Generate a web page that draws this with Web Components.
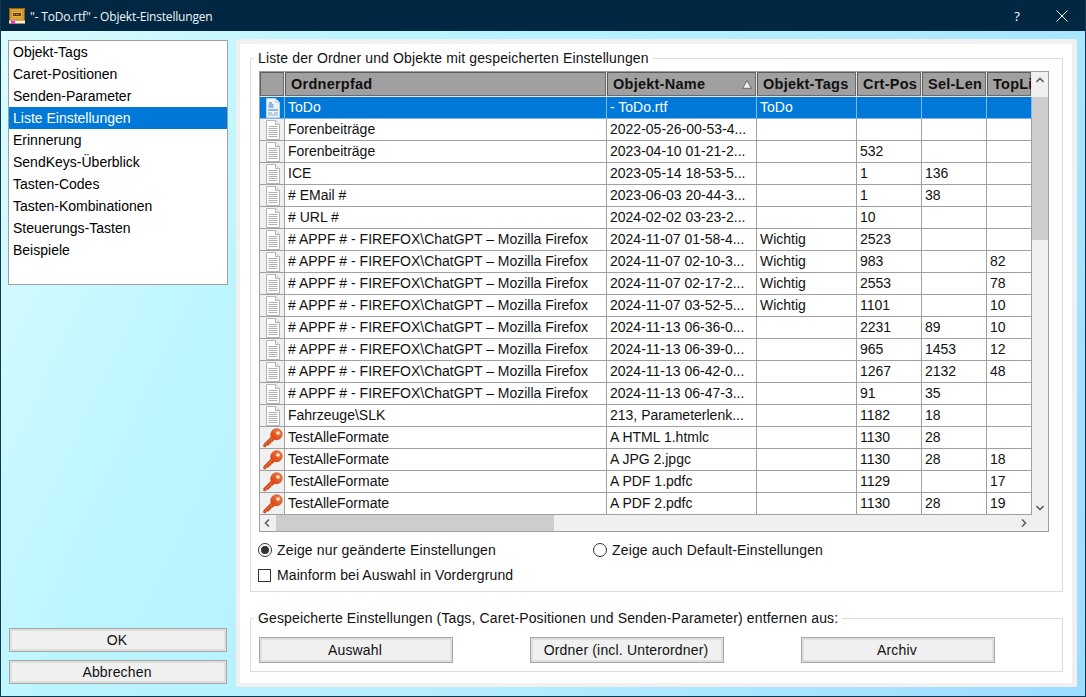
<!DOCTYPE html>
<html><head><meta charset="utf-8"><style>
html,body{margin:0;padding:0;height:100%;overflow:hidden}
body{font:14px "Liberation Sans",Arial,sans-serif;color:#000}
</style></head><body>
<x-window heading="&quot;- ToDo.rtf&quot; - Objekt-Einstellungen">
  <x-sidebar slot="side" items="Objekt-Tags|Caret-Positionen|Senden-Parameter|Liste Einstellungen|Erinnerung|SendKeys-Überblick|Tasten-Codes|Tasten-Kombinationen|Steuerungs-Tasten|Beispiele" selected="3"></x-sidebar>
  <x-panel slot="main">
    <x-group legend="Liste der Ordner und Objekte mit gespeicherten Einstellungen" class="list">
      <x-grid></x-grid>
      <x-options></x-options>
    </x-group>
    <x-group legend="Gespeicherte Einstellungen (Tags, Caret-Positionen und Senden-Parameter) entfernen aus:" class="rm">
      <x-actions></x-actions>
    </x-group>
  </x-panel>
</x-window>
<script>
const def=(n,css,html,init)=>customElements.define(n,class extends HTMLElement{
  connectedCallback(){ if(this.shadowRoot)return; const s=this.attachShadow({mode:'open'});
    s.innerHTML=`<style>${css}</style>`+(typeof html==='function'?html(this):html); if(init)init(this,s);} });

const bookIcon=`<svg width="16" height="16" viewBox="0 0 16 16"><rect x="0" y="0" width="16" height="12.500" rx="1" fill="#d3962c"/><rect x=".5" y=".5" width="15" height="12" rx="1" fill="none" stroke="#8f5e16"/><path d="M2 2h12M2 10.500h12" stroke="#f0c464" stroke-dasharray="1 1"/><rect x="3" y="4" width="10" height="5" fill="#e6b54c"/><rect x="4" y="5" width="8" height="3" fill="#5c3a12"/><path d="M5 6.500h6" stroke="#e3b03e" stroke-dasharray="1 1"/><rect x="0" y="12.500" width="16" height="2.500" fill="#f7efdc"/><rect x="0" y="15" width="16" height="1" fill="#a98b58"/><rect x="2" y="13" width="4" height="3" fill="#e436c8"/></svg>`;
def('x-window',`
:host{display:flex;flex-direction:column;width:1086px;height:697px;box-sizing:border-box;border:1px solid #0e3a56;border-top-color:#012743;background:linear-gradient(115deg,#dcfdff 0%,#bdf5ff 25%,#b2ecff 60%,#9cdcff 100%)}
header{display:flex;align-items:center;height:30px;flex:none;background:#012743;color:#fff;font:12px "Open Sans","Noto Sans",sans-serif;padding-left:8px}
.ic{display:flex;margin-right:5px}
.t{flex:1;color:#f0f6fa;letter-spacing:-.18px}
.q{width:46px;text-align:center;font-size:13px;padding-left:2px;box-sizing:border-box}
.x{width:46px;display:flex;justify-content:center;margin-left:0}
.body{flex:1;display:flex;min-height:0;padding:8px 8px 9px 7px;gap:8px}
`,h=>`<header><span class="ic">${bookIcon}</span><span class="t">${h.getAttribute('heading').replace(/"/g,'&quot;')}</span><span class="q">?</span><span class="x"><svg width="12" height="12" viewBox="0 0 12 12"><path d="M.5.5l11 11M11.5.5l-11 11" stroke="#fff" fill="none"/></svg></span></header><div class="body"><slot name="side"></slot><slot name="main"></slot></div>`);

def('x-button',`
:host{display:block;box-sizing:border-box;background:#f0f0f0;border:1px solid #a6a6a6;box-shadow:inset 0 0 0 2px #dedede;text-align:center;padding-right:2px;font:14px "Liberation Sans",Arial,sans-serif;letter-spacing:.17px;color:#111}
`,`<slot></slot>`);

def('x-sidebar',`
:host{display:flex;flex-direction:column;width:220px;flex:none}
.l{box-sizing:border-box;height:245px;margin-top:1px;background:#fff;border:1px solid #a0a0a0}
.i{height:22px;line-height:22px;padding-left:4px}
.s{background:#0078d7;color:#fff}
.b{margin-top:auto;display:flex;flex-direction:column;gap:8px;padding:0 1px 3px}
x-button{height:24px;line-height:22px}
`,h=>`<div class="l">${h.getAttribute('items').split('|').map((t,i)=>`<div class="i${i==h.getAttribute('selected')?' s':''}">${t}</div>`).join('')}</div><div class="b"><x-button>OK</x-button><x-button>Abbrechen</x-button></div>`);

def('x-panel',`
:host{display:flex;flex-direction:column;width:841px;flex:none;box-sizing:border-box;background:#fff;border:solid #f0f0f0;border-width:5px 5px 4px 4px;padding:14px 9px 11px 10px;gap:26px}
`,`<slot></slot>`);

def('x-group',`
:host{display:block;position:relative;flex:none;box-sizing:border-box;border:1px solid #dcdcdc;padding:12px 8px 0 8px}
:host(.list){height:534px}
:host(.rm){height:54px;padding-top:18px}
.lg{position:absolute;left:3px;top:-9px;background:#fff;padding:0 4px;line-height:17px;white-space:nowrap;color:#111;letter-spacing:.13px}
`,h=>`<div class="lg">${h.getAttribute('legend')}</div><slot></slot>`);

const doc=sel=>{const f=sel?'#eaf4fd':'#fff',st=sel?'#b9d4ee':'#b4b4b4',ln=sel?'#3b78c4':'#b0b0b0';
 return `<svg width="16" height="20" viewBox="0 0 16 20"><path d="M1.500.5h9l4 4v15h-13z" fill="${f}" stroke="${st}"/><path d="M10.500.5v4h4" fill="#eee" stroke="${st}"/>`+
 (sel?`<path d="M4 5h3M3.500 7h5M3.500 9h5M3 12h10" stroke="${ln}" stroke-width="1"/><path d="M3 15h4M9 15h4" stroke="#8aa" /><path d="M3 17h10" stroke="#9ab"/>`
 :`<path d="M3.500 6.500h9M3.500 8.500h9M3.500 10.500h9M3.500 12.500h9M3.500 14.500h9M3.500 16.500h9" stroke="${ln}"/>`)+`</svg>`;};
const key=`<svg width="20" height="20" viewBox="0 0 20 20"><defs><linearGradient id="k" x1="0" y1="1" x2="1" y2="0"><stop offset="0" stop-color="#d03c0e"/><stop offset=".55" stop-color="#e04e18"/><stop offset="1" stop-color="#f38a50"/></linearGradient></defs><path d="M.6 16.500l7.400-7.600C7.300 6.700 7.700 4 9.600 2.300 11.600.4 14.600.2 16.800 1.600c2.300 1.500 3.100 4.400 2 6.800-1.200 2.700-4.400 4-7.300 3.100l-1.800 1.800H8v1.900H6v1.900H4L2.400 19l-1.700-.2z" fill="url(#k)" stroke="#b9360c" stroke-width=".5"/><ellipse cx="15" cy="5" rx="1.900" ry="1.700" fill="#ffe6cc"/><path d="M1.500 17.800L9 10.300" stroke="#f48d5a" stroke-width=".9" fill="none"/></svg>`;

const APPF='# APPF # - FIREFOX\\ChatGPT – Mozilla Firefox';
const rows=[
['d','ToDo','- ToDo.rtf','ToDo','','',''],
['d','Forenbeiträge','2022-05-26-00-53-4...','','','',''],
['d','Forenbeiträge','2023-04-10 01-21-2...','','532','',''],
['d','ICE','2023-05-14 18-53-5...','','1','136',''],
['d','# EMail #','2023-06-03 20-44-3...','','1','38',''],
['d','# URL #','2024-02-02 03-23-2...','','10','',''],
['d',APPF,'2024-11-07 01-58-4...','Wichtig','2523','',''],
['d',APPF,'2024-11-07 02-10-3...','Wichtig','983','','82'],
['d',APPF,'2024-11-07 02-17-2...','Wichtig','2553','','78'],
['d',APPF,'2024-11-07 03-52-5...','Wichtig','1101','','10'],
['d',APPF,'2024-11-13 06-36-0...','','2231','89','10'],
['d',APPF,'2024-11-13 06-39-0...','','965','1453','12'],
['d',APPF,'2024-11-13 06-42-0...','','1267','2132','48'],
['d',APPF,'2024-11-13 06-47-3...','','91','35',''],
['d','Fahrzeuge\\SLK','213, Parameterlenk...','','1182','18',''],
['k','TestAlleFormate','A HTML 1.htmlc','','1130','28',''],
['k','TestAlleFormate','A JPG 2.jpgc','','1130','28','18'],
['k','TestAlleFormate','A PDF 1.pdfc','','1129','','17'],
['k','TestAlleFormate','A PDF 2.pdfc','','1130','28','19']];
const heads=['','Ordnerpfad','Objekt-Name','Objekt-Tags','Crt-Pos','Sel-Len','TopLi'];
const chev=d=>`<svg width="8" height="6" viewBox="0 0 8 6"><path d="${d}" fill="none" stroke="#606060" stroke-width="1.6"/></svg>`;
const sortIc=`<svg class="sort" width="10" height="9" viewBox="0 0 10 9"><path d="M5 .7L9.300 8.300H.7z" fill="#f2f2f2" stroke="#555" stroke-width=".8"/></svg>`;
def('x-grid',`
:host{display:grid;grid-template-columns:1fr 16px;grid-template-rows:1fr 16px;box-sizing:border-box;width:790px;height:461px;border:1px solid #a0a0a0;background:#f0f0f0}
.cells{overflow:hidden;background:#fff;display:grid;grid-template-columns:25px 322px 150px 100px 65px 65px 45px;grid-auto-rows:22px;grid-template-rows:25px;align-content:start;width:772px}
.h{background:#a0a0a0;box-sizing:border-box;border-right:1px solid #e8e8e8;border-bottom:1px solid #e8e8e8;box-shadow:inset -1px -1px 0 #6a6a6a,inset 1px 1px 0 #5c5c5c;font-weight:bold;font-size:14.500px;letter-spacing:.25px;line-height:24px;padding-left:6px;white-space:nowrap;overflow:hidden;color:#111;position:relative}
.h:last-child{padding-left:8px;letter-spacing:.2px;border-right:0}
.c{box-sizing:border-box;border-right:1px solid #a0a0a0;border-bottom:1px solid #a0a0a0;padding-left:3px;line-height:21px;white-space:nowrap;overflow:hidden;color:#111}
.i{background:#f0f0f0;padding:0 0 0 1px;display:flex;align-items:center;justify-content:center;overflow:hidden;border-right-color:#a0a0a0}
.s{background:#0078d7;color:#fff;border-bottom-color:#7fb8e8;border-right-color:#7fb8e8}
.sort{position:absolute;right:4px;top:8px}
.v,.hb{background:#f0f0f0;position:relative;display:flex}
.v{flex-direction:column;align-items:center;justify-content:space-between;padding:5px 0 4px}
.v i{position:absolute;left:0;right:0;top:25px;height:143px;background:#cdcdcd}
.hb{align-items:center;justify-content:space-between;padding:0 5px 0 4px}
.hb i{position:absolute;left:16px;top:0;bottom:0;width:278px;background:#cdcdcd}
.v svg,.hb svg{position:relative}
`,()=>{
 let h=heads.map((t,i)=>`<div class="h">${t}${i==2?sortIc:''}</div>`).join('');
 rows.forEach((r,ri)=>{const s=ri==0?' s':'';
  h+=`<div class="c i${s}">${r[0]=='d'?doc(ri==0):key}</div>`;
  r.slice(1).forEach(t=>h+=`<div class="c${s}">${t}</div>`);});
 return `<div class="cells">${h}</div><div class="v"><i></i>${chev('M.5 5L4 1.500 7.500 5')}${chev('M.5 1L4 4.500 7.500 1')}</div><div class="hb"><i></i><svg width="6" height="8" viewBox="0 0 6 8"><path d="M5 .5L1.500 4 5 7.500" fill="none" stroke="#606060" stroke-width="1.6"/></svg><svg width="6" height="8" viewBox="0 0 6 8"><path d="M1 .5L4.500 4 1 7.500" fill="none" stroke="#606060" stroke-width="1.6"/></svg></div><div></div>`;
});

def('x-radio',`
:host{display:flex;align-items:center;gap:5px;height:16px;color:#111;white-space:nowrap;letter-spacing:.15px}
.o{width:14px;height:14px;box-sizing:border-box;border:1px solid #333;border-radius:50%;background:#fff;display:flex;align-items:center;justify-content:center}
:host([checked]) .o::after{content:"";width:8px;height:8px;border-radius:50%;background:#333}
`,`<span class="o"></span><slot></slot>`);
def('x-check',`
:host{display:flex;align-items:center;gap:6px;height:16px;color:#111;white-space:nowrap;letter-spacing:.1px}
.o{width:13px;height:13px;box-sizing:border-box;border:1px solid #333;background:#fff}
`,`<span class="o"></span><slot></slot>`);
def('x-options',`
:host{display:flex;flex-direction:column;padding-top:10px;gap:9px;margin-left:-1px}
.r{display:flex}
x-radio:first-child{width:335px}
`,`<div class="r"><x-radio checked>Zeige nur geänderte Einstellungen</x-radio><x-radio>Zeige auch Default-Einstellungen</x-radio></div><x-check>Mainform bei Auswahl in Vordergrund</x-check>`);
def('x-actions',`
:host{display:flex;gap:77px}
x-button{width:194px;height:26px;line-height:25px}
`,`<x-button>Auswahl</x-button><x-button>Ordner (incl. Unterordner)</x-button><x-button>Archiv</x-button>`);
</script>
</body></html>
